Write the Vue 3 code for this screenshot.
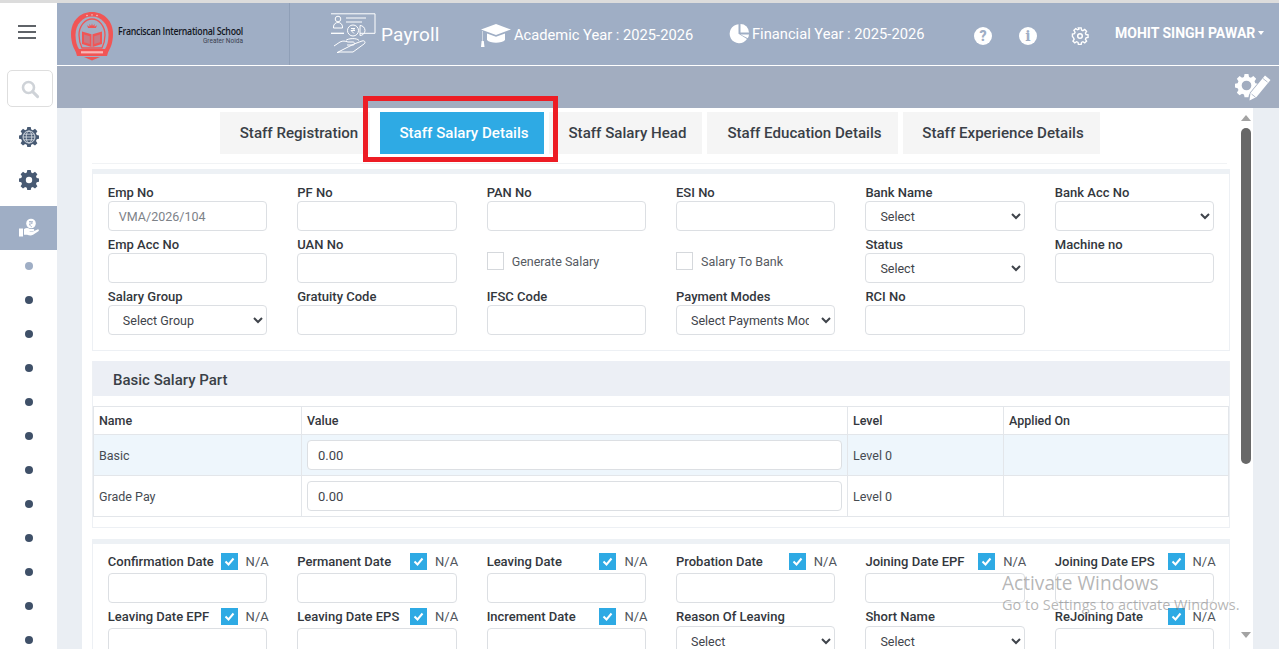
<script setup>
const row1 = [
  { label: 'Emp No', kind: 'input', value: 'VMA/2026/104' },
  { label: 'PF No', kind: 'input' },
  { label: 'PAN No', kind: 'input' },
  { label: 'ESI No', kind: 'input' },
  { label: 'Bank Name', kind: 'select', value: 'Select' },
  { label: 'Bank Acc No', kind: 'select', value: '' },
  { label: 'Emp Acc No', kind: 'input' },
  { label: 'UAN No', kind: 'input' },
  { label: 'Generate Salary', kind: 'check' },
  { label: 'Salary To Bank', kind: 'check' },
  { label: 'Status', kind: 'select', value: 'Select' },
  { label: 'Machine no', kind: 'input' },
  { label: 'Salary Group', kind: 'select', value: 'Select Group' },
  { label: 'Gratuity Code', kind: 'input' },
  { label: 'IFSC Code', kind: 'input' },
  { label: 'Payment Modes', kind: 'select', value: 'Select Payments Modes' },
  { label: 'RCI No', kind: 'input' }
]
const dates = [
  { label: 'Confirmation Date', na: true },
  { label: 'Permanent Date', na: true },
  { label: 'Leaving Date', na: true },
  { label: 'Probation Date', na: true },
  { label: 'Joining Date EPF', na: true },
  { label: 'Joining Date EPS', na: true },
  { label: 'Leaving Date EPF', na: true },
  { label: 'Leaving Date EPS', na: true },
  { label: 'Increment Date', na: true },
  { label: 'Reason Of Leaving', select: true },
  { label: 'Short Name', select: true },
  { label: 'ReJoining Date', na: true }
]
const tabs = ['Staff Registration', 'Staff Salary Details', 'Staff Salary Head', 'Staff Education Details', 'Staff Experience Details']
const dots = 12
const cog = 'M8.300 0h3.400l.5 2.500 1.600.7 2.200-1.400 2.400 2.400-1.400 2.100.7 1.700 2.300.5v3.300l-2.300.5-.7 1.700 1.400 2.200-2.400 2.300-2.200-1.400-1.600.7-.5 2.400H8.300l-.5-2.400-1.700-.7-2.100 1.400-2.400-2.300 1.400-2.200-.7-1.700L0 11.800V8.500l2.300-.5.700-1.700-1.400-2.100L4 1.800l2.100 1.400 1.700-.7z'
</script>

<template>
  <div class="page">
    <aside class="side">
      <div class="burger"><i></i><i></i><i></i></div>
      <div class="search">
        <svg width="20" height="20" viewBox="0 0 20 20"><circle cx="8.500" cy="8.500" r="5.500" fill="none" stroke="#cfd3d8" stroke-width="2.600"/><path d="M12.600 12.600l5 5" stroke="#cfd3d8" stroke-width="3" stroke-linecap="round"/></svg>
      </div>
      <div class="nav">
        <svg width="20" height="20" viewBox="0 0 20 20"><path :d="cog" fill="#485a73"/><circle cx="10" cy="10" r="6" fill="none" stroke="#dfe4ea" stroke-width=".9"/><ellipse cx="10" cy="10" rx="2.800" ry="6" fill="none" stroke="#dfe4ea" stroke-width=".8"/><path d="M4 10h12M5 7.200h10M5 12.800h10" stroke="#dfe4ea" stroke-width=".8"/></svg>
      </div>
      <div class="nav nav2">
        <svg width="20" height="20" viewBox="0 0 20 20"><path :d="cog" fill="#485a73"/><circle cx="10" cy="10" r="3.200" fill="#fff"/></svg>
      </div>
      <div class="active">
        <svg width="20" height="20" viewBox="0 0 20 20"><circle cx="12" cy="5.500" r="4.800" fill="#fff"/><path d="M10 3.500h4M10 5h4M10.500 3.500c3 0 3 3-.5 3l3 2.500" fill="none" stroke="#9faec5" stroke-width=".7"/><path d="M0 10.500h4v8H0z" fill="#fff"/><path d="M5 11c2-1.500 4-1.500 6 0h3.500c1 0 1 2-.3 2H10.500l.2.600h3.300l4.500-2.200c1.300-.5 1.900 1 .9 1.800l-5.300 3.600c-2 1-4 .6-6 0H5z" fill="#fff"/></svg>
      </div>
      <div class="dots">
        <span v-for="n in dots" :key="n" :class="{ first: n === 1 }"></span>
      </div>
    </aside>

    <div class="main">
      <header class="top">
        <div class="brand">
          <svg class="logo" width="44" height="50" viewBox="0 0 44 50">
            <path d="M22 1C10 1 1 10 1 23c0 9 3 16 6 19h30c3-3 6-10 6-19C43 10 34 1 22 1z" fill="#f15555"/>
            <path d="M22 5.500C13 5.500 5.500 13 5.500 24c0 6 1.500 11 3.500 14h26c2-3 3.500-8 3.500-14C38.500 13 31 5.500 22 5.500z" fill="#a3afc4"/>
            <path d="M22 8C15 8 9 15 9 24c0 6 1.500 10 3 13h20c1.500-3 3-7 3-13C35 15 29 8 22 8z" fill="none" stroke="#f15555" stroke-width="1.300"/>
            <path d="M17 3.600l1 .9-1 .9-1-.9zM22 3l1 .9-1 .9-1-.9zM27 3.600l1 .9-1 .9-1-.9z" fill="#f7c0c0"/>
            <path d="M22 12.500l.9 2.600 1.800-2.100-.2 2.800 2.500-1.500-1.100 2.700H18.100l-1.100-2.700 2.500 1.500-.2-2.800 1.800 2.100z" fill="#f15555"/>
            <path d="M12 20.500l9.500 2.800V36L12 33zM32 20.500l-9.500 2.800V36L32 33z" fill="#f15555"/>
            <path d="M14 23.500l5.800 1.800v7.800L14 31.300zM30 23.500l-5.800 1.800v7.800L30 31.300z" fill="#c77a85"/>
            <path d="M5 38h34l-2 7H7z" fill="#f15555"/>
            <path d="M14 46h16l-8 3.500z" fill="#f15555"/>
            <rect x="11" y="40.200" width="22" height="2.200" fill="#f7b7b7"/>
          </svg>
          <div class="school">
            <div class="sname">Franciscan International School</div>
            <div class="scity">Greater Noida</div>
          </div>
        </div>
        <div class="module">
          <svg width="46" height="42" viewBox="0 0 46 42" fill="none" stroke="#fff" stroke-width="1">
            <path d="M1 .8h44v19.500H30M14 20.300H1z"/>
            <circle cx="8" cy="6" r="2.800"/><path d="M3.500 14c0-6 9-6 9 0v1h-9z"/>
            <path d="M16 5h20M16 9h16"/>
            <circle cx="23" cy="17.500" r="5.500"/><path d="M30 12.500a5 5 0 0 1 0 10z"/>
            <path d="M21 15.500h4M21 17.500h4M22 15.500c3 0 3 2-1 2l3 3"/>
            <path d="M4 33l6-4c3-1.500 5-1 8 0h5c2 0 2 3 0 3h-6M24 31l8-3c3-1 4 2 2 3l-11 8H10l-3 .6z"/>
            <path d="M16 27.500c1-2 11-3 13 0"/>
          </svg>
          <span>Payroll</span>
        </div>
        <div class="year ay">
          <svg width="32" height="24" viewBox="0 0 32 24"><path d="M16 1L1 6.500l15 5.500 15-5.500z" fill="#fff"/><path d="M7 10.500v6.500c3 3.500 15 3.500 18 0v-6.500l-9 3.300zM2.500 8v10h-.9l-.6 6h3.500l-.7-6H3V8z" fill="#fff"/></svg>
          <span>Academic Year : 2025-2026</span>
        </div>
        <div class="year fy">
          <svg width="21" height="21" viewBox="0 0 21 21"><path d="M9.500 1.200A9.500 9.500 0 1 0 18 16l-8.500-5.200z" fill="#fff"/><path d="M11.500 1a8.500 8.500 0 0 1 8.500 8.500h-8.500z" fill="#fff"/><path d="M11.500 11.500h8.500a9 9 0 0 1-1.200 3.800z" fill="#fff"/></svg>
          <span>Financial Year : 2025-2026</span>
        </div>
        <div class="tools">
          <span class="round">?</span>
          <span class="round serif">i</span>
          <svg class="cog" width="18" height="18" viewBox="0 0 18 18" fill="none" stroke="#fff" stroke-width="1.500"><path d="M7.500 1h3l.4 2.300 1.500.7 2-1.300 2 2-1.300 2 .7 1.500 2.200.4v2.800l-2.200.4-.7 1.500 1.300 2-2 2-2-1.300-1.500.7-.4 2.200h-3l-.4-2.200-1.500-.7-2 1.300-2-2 1.300-2-.7-1.500L1 10.400V7.600l2.200-.4.700-1.500-1.300-2 2-2 2 1.300 1.500-.7z" transform="translate(.5 0) scale(.92)"/><circle cx="9" cy="9" r="2.300"/></svg>
          <span class="user">MOHIT SINGH PAWAR</span>
          <i class="caret"></i>
        </div>
      </header>
      <div class="sub">
        <svg width="36" height="28" viewBox="0 0 36 28">
          <path fill-rule="evenodd" transform="translate(0 1) scale(1.150)" :d="cog + 'M10 5.800a4.200 4.200 0 1 0 0 8.400 4.200 4.200 0 0 0 0-8.400z'" fill="#fff"/>
          <path d="M30 2.500l5.500 4.500L21.500 24l-7 3.500 1-7.500z" fill="#fff" stroke="#a2adc0" stroke-width="1.500" paint-order="stroke"/>
          <path d="M16.500 21l4 3.200M28 5.500l4.500 3.600" stroke="#a2adc0" stroke-width=".8"/>
        </svg>
      </div>

      <div class="body">
        <div class="panel">
          <div class="scroll">
            <div class="tabs">
              <div v-for="(t, i) in tabs" :key="t" class="tab" :class="['t' + i, { on: i === 1 }]">{{ t }}</div>
            </div>
            <div class="rule"></div>

            <section class="card grid-card">
              <div v-for="f in row1" :key="f.label" class="field">
                <template v-if="f.kind === 'check'">
                  <div class="checkline"><span class="box"></span><span class="checktext">{{ f.label }}</span></div>
                </template>
                <template v-else>
                  <label>{{ f.label }}</label>
                  <div v-if="f.kind === 'input'" class="ctl">{{ f.value }}</div>
                  <select v-else class="ctl sel"><option>{{ f.value }}</option></select>
                </template>
              </div>
            </section>

            <section class="card2">
              <h3>Basic Salary Part</h3>
              <div class="tablewrap">
                <table>
                  <colgroup><col class="c1"/><col class="c2"/><col class="c3"/><col/></colgroup>
                  <thead><tr><th>Name</th><th>Value</th><th>Level</th><th>Applied On</th></tr></thead>
                  <tbody>
                    <tr class="hl"><td>Basic</td><td><div class="val">0.00</div></td><td>Level 0</td><td></td></tr>
                    <tr><td>Grade Pay</td><td><div class="val">0.00</div></td><td>Level 0</td><td></td></tr>
                  </tbody>
                </table>
              </div>
            </section>

            <section class="card grid-card dates">
              <div v-for="d in dates" :key="d.label" class="field">
                <div class="dlabel">
                  <label>{{ d.label }}</label>
                  <template v-if="d.na">
                    <span class="tick"><svg width="11" height="9" viewBox="0 0 11 9"><path d="M1.500 4.500l3 3 5-6" fill="none" stroke="#fff" stroke-width="2"/></svg></span>
                    <span class="na">N/A</span>
                  </template>
                </div>
                <select v-if="d.select" class="ctl sel"><option>Select</option></select>
                <div v-else class="ctl"></div>
              </div>
            </section>
          </div>
          <div class="bar">
            <i class="up"></i>
            <b></b>
            <i class="down"></i>
          </div>
        </div>
      </div>
    </div>

    <div class="watermark">
      <div class="w1">Activate Windows</div>
      <div class="w2">Go to Settings to activate Windows.</div>
    </div>
    <div class="redbox"></div>
  </div>
</template>

<style>
html, body { margin: 0; overflow: hidden; }
</style>

<style scoped>
.page {
  position: relative;
  display: flex;
  width: 1279px;
  height: 649px;
  overflow: hidden;
  background: #fff;
  font-family: Roboto, "Liberation Sans", sans-serif;
  color: #3a3f47;
  border-top: 3px solid #dcdcdc;
  box-sizing: border-box;
}
.side { width: 57px; flex: none; display: flex; flex-direction: column; background: #fff; }
.burger { height: 67px; display: flex; flex-direction: column; gap: 4px; padding: 22px 0 0 18px; box-sizing: border-box; }
.burger i { width: 18px; height: 2px; background: #5f6368; }
.search { width: 44px; height: 35px; margin-left: 7px; border: 1px solid #dedede; border-radius: 5px; display: flex; align-items: center; justify-content: center; }
.nav { height: 20px; margin-top: 20px; display: flex; justify-content: center; }
.nav2 { margin-top: 23px; }
.active { margin-top: 16px; height: 44px; background: #9faec5; display: flex; align-items: center; justify-content: center; }
.dots { display: flex; flex-direction: column; align-items: center; gap: 26px; padding-top: 12px; }
.dots span { width: 8px; height: 8px; border-radius: 50%; background: #3f5068; }
.dots span.first { background: #9faec5; }

.main { flex: 1; min-width: 0; display: flex; flex-direction: column; }
.top { height: 62px; flex: none; background: #9faec5; display: flex; align-items: center; color: #fff; }
.brand { width: 233px; height: 62px; box-sizing: border-box; border-right: 1px solid #8f9fb7; display: flex; align-items: center; padding-left: 13px; }
.logo { flex: none; margin-top: 3px; }
.school { margin-left: 4px; margin-top: 1px; width: 125px; }
.sname { font-family: "Open Sans", sans-serif; font-size: 11px; font-weight: 600; color: #14181f; white-space: nowrap; letter-spacing: -.35px; line-height: 12px; transform: scaleX(.8); transform-origin: left center; }
.scity { font-size: 6.500px; color: #3b4250; text-align: right; line-height: 8px; }
.module { display: flex; align-items: center; margin-left: 40px; width: 150px; }
.module span { font-size: 19px; margin-left: 5px; letter-spacing: .15px; }
.year { display: flex; align-items: center; font-size: 14.700px; white-space: nowrap; }
.year span { margin-left: 2px; }
.ay { width: 249px; margin-top: 2px; }
.fy { width: 245px; margin-top: -1px; }
.tools { display: flex; align-items: center; }
.round { width: 18px; height: 18px; border-radius: 50%; background: #fff; color: #9faec5; font-weight: 900; font-size: 14px; display: flex; align-items: center; justify-content: center; margin-top: 3px; }
.round.serif { margin-left: 27px; font-family: "DejaVu Serif", serif; }
.cog { margin-left: 34px; margin-top: 3px; }
.user { margin-left: 26px; font-size: 14px; font-weight: 700; white-space: nowrap; margin-top: -3px; }
.caret { margin-left: 3px; margin-top: -2px; border: 3.500px solid transparent; border-top: 4px solid #fff; border-bottom: 0; }

.sub { height: 43px; flex: none; border-top: 1px solid #fff; background: #a2adc0; display: flex; justify-content: flex-end; align-items: center; padding-right: 8px; box-sizing: border-box; }

.body { flex: 1; min-height: 0; background: #eaeef3; padding: 0 26px 0 25px; }
.panel { height: 100%; background: #fff; display: flex; overflow: hidden; }
.scroll { flex: 1; min-width: 0; padding: 4px 12px 0 10px; overflow: hidden; }
.bar { width: 14px; flex: none; display: flex; flex-direction: column; align-items: center; position: relative; }
.bar b { width: 10px; height: 336px; margin-top: 7px; background: #686868; border-radius: 5px; }
.bar .up { margin-top: 7px; border: 5px solid transparent; border-top: 0; border-bottom: 6px solid #a3a3a3; }
.bar .down { margin-top: 168px; border: 5px solid transparent; border-bottom: 0; border-top: 6px solid #a3a3a3; }

.tabs { display: flex; height: 42px; padding-left: 128px; }
.tab { height: 42px; box-sizing: border-box; padding: 0 0 1px 4px; display: flex; align-items: center; justify-content: center; background: #f5f5f5; font-size: 15.100px; font-weight: 500; color: #3a3f47; white-space: nowrap; }
.t0 { width: 150px; margin-right: 10px; padding-left: 8px; }
.t1 { width: 164px; background: #2eaae4; color: #fff; margin-right: 5px; }
.t2 { width: 153px; margin-right: 5px; }
.t3 { width: 191px; margin-right: 5px; }
.t4 { width: 197px; padding-left: 3px; }
.rule { height: 1px; background: #f1f3f5; margin: 9px 0 5px; }

.card { border: 1px solid #edf0f4; border-top: 5px solid #edf1f5; }
.grid-card { display: grid; grid-template-columns: repeat(6, 159.400px); column-gap: 30px; row-gap: 0; padding: 10px 14.850px 10px; grid-auto-rows: 52px; width: 1138px; box-sizing: border-box; }
.field { min-width: 0; }
.field label { display: block; font-size: 13px; font-weight: 500; color: #33373d; line-height: 16px; white-space: nowrap; padding-top: 1px; margin-bottom: -1px; }
.ctl { display: flex; align-items: center; height: 30px; width: 100%; box-sizing: border-box; margin: 1px 0 0; padding: 0 10px; border: 1px solid #dcdfe3; border-radius: 4px; background: #fff; font: 400 12.500px Roboto, sans-serif; color: #3f444b; }
.grid-card > .field:first-child .ctl { color: #7d8288; }
select.ctl { padding: 0 9px 0 10px; }
.checkline { display: flex; align-items: center; gap: 8px; height: 18px; margin-top: 16px; }
.box { width: 15px; height: 16px; border: 1px solid #d5d8dc; display: block; }
.checktext { font-size: 12.500px; color: #555a61; }

.card2 { margin-top: 10px; width: 1138px; border: 1px solid #edf0f4; border-top: 0; padding-bottom: 10px; box-sizing: border-box; }
.card2 h3 { margin: 0; height: 35px; background: #eceff5; font-size: 15px; font-weight: 500; line-height: 38px; padding-left: 20px; color: #3a3f47; }
.tablewrap { padding: 10px 0 0 0; }
table { border-collapse: collapse; width: 1136px; table-layout: fixed; font-size: 12.500px; color: #464b52; border: 1px solid #e3e6ea; }
.c1 { width: 208px; } .c2 { width: 546px; } .c3 { width: 156px; }
th, td { border: 1px solid #e3e6ea; padding: 0 5px; text-align: left; }
th { height: 28px; font-weight: 500; color: #33373d; box-sizing: border-box; padding-bottom: 1px; }
td { height: 41px; box-sizing: border-box; }
.hl td { background: #eef6fc; }
.val { height: 30px; margin-top: 0; padding: 0 10px; display: flex; align-items: center; background: #fff; border: 1px solid #dcdfe3; border-radius: 4px; font-size: 13px; box-sizing: border-box; color: #3f444b; }

.dates { margin-top: 11px; grid-auto-rows: 55px; padding-top: 9px; }
.dlabel { display: flex; align-items: center; height: 17px; margin: 0 -1.500px 0 0; }
.dlabel label { flex: 1; min-width: 0; padding-top: 0; margin-bottom: 0; }
.tick { width: 17px; height: 17px; background: #2eaae4; display: flex; align-items: center; justify-content: center; flex: none; }
.na { font-size: 13px; color: #50555c; margin-left: 8px; }
.dates .ctl { margin-top: 3px; }
.dates select.ctl { margin-top: 1px; }

.redbox { position: absolute; left: 363px; top: 93px; width: 195px; height: 66px; box-sizing: border-box; border: 5px solid #ed1c24; pointer-events: none; }
.watermark { position: absolute; left: 1002px; top: 567px; color: rgba(120,120,120,.55); font-family: "Open Sans", sans-serif; pointer-events: none; white-space: nowrap; }
.w1 { font-size: 19.100px; line-height: 26px; }
.w2 { font-size: 14.500px; line-height: 20px; margin-top: -1px; }
</style>
